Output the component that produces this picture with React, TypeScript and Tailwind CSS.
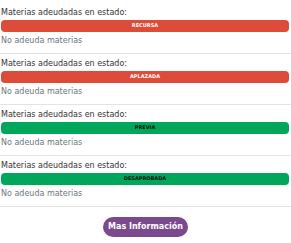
const estados = [
  { label: 'RECURSA', bar: 'bg-[#dd4b39] text-white' },
  { label: 'APLAZADA', bar: 'bg-[#dd4b39] text-white' },
  { label: 'PREVIA', bar: 'bg-[#00a65a] text-[#111]' },
  { label: 'DESAPROBADA', bar: 'bg-[#00a65a] text-[#111]' },
]

export default function App() {
  return (
    <div className="w-[291px] h-[243px] bg-white pt-[3px] font-['DejaVu_Sans',sans-serif]">
      {estados.map((e) => (
        <section
          key={e.label}
          className="pt-[4px] pb-[6px] border-b border-[#e3e3e3] pl-[1px] pr-[2px]"
        >
          <p className="text-[8px] leading-[12px] text-[#333]">
            Materias adeudadas en estado:
          </p>
          <div
            className={`mt-[1px] h-[12px] rounded-[4px] flex items-center justify-center text-[5px] font-bold ${e.bar}`}
          >
            {e.label}
          </div>
          <p className="mt-[3px] text-[8px] leading-[12px] text-[#6c757d]">
            No adeuda materias
          </p>
        </section>
      ))}
      <div className="flex justify-center mt-[10px]">
        <button className="h-[20px] w-[85px] rounded-full bg-[#7b4a8e] text-white text-[8px] font-bold">
          Mas Información
        </button>
      </div>
    </div>
  )
}
